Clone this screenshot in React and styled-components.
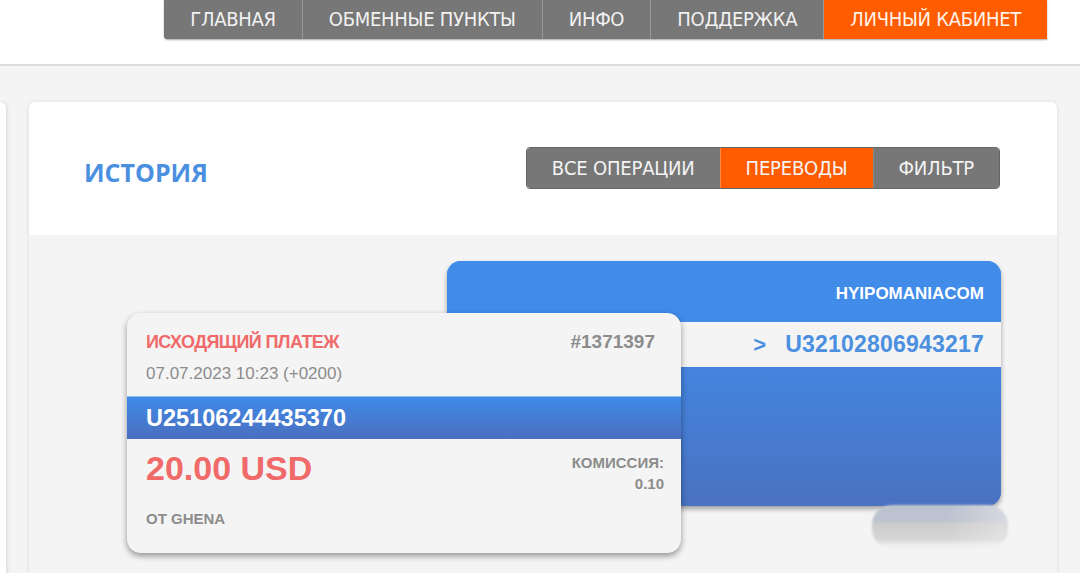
import React from "react";
import styled, { createGlobalStyle } from "styled-components";

const NARROW = `"DejaVu Sans Condensed", "DejaVu Sans", sans-serif`;
const BODY = `"Liberation Sans", Arial, sans-serif`;

const GlobalStyle = createGlobalStyle`
    html, body {
        margin: 0;
        padding: 0;
        background: #f4f4f4;
        font-family: ${BODY};
    }
    body {
        width: 1080px;
        height: 573px;
        overflow: hidden;
    }
`;

const menu = ["ГЛАВНАЯ", "ОБМЕННЫЕ ПУНКТЫ", "ИНФО", "ПОДДЕРЖКА", "ЛИЧНЫЙ КАБИНЕТ"];
const tabs = ["ВСЕ ОПЕРАЦИИ", "ПЕРЕВОДЫ", "ФИЛЬТР"];

const App = () => {
    return (
        <>
            <GlobalStyle />
            <Header>
                <Nav>
                    {menu.map((item, i) => (
                        <NavItem key={item} $active={i === menu.length - 1}>{item}</NavItem>
                    ))}
                </Nav>
            </Header>
            <Page>
                <SideEdge />
                <Card>
                    <CardHead>
                        <Title>ИСТОРИЯ</Title>
                        <Tabs>
                            {tabs.map((tab) => (
                                <Tab key={tab} $active={tab === "ПЕРЕВОДЫ"}>{tab}</Tab>
                            ))}
                        </Tabs>
                    </CardHead>
                    <CardBody>
                        <BackStack>
                            <Wallet>
                                <WalletName>HYIPOMANIACOM</WalletName>
                                <WalletRow>
                                    <Arrow>&gt;</Arrow>
                                    U32102806943217
                                </WalletRow>
                                <WalletFill />
                            </Wallet>
                            <Smudge />
                        </BackStack>
                        <Payment>
                            <PayTop>
                                <PayType>ИСХОДЯЩИЙ ПЛАТЕЖ</PayType>
                                <PayId>#1371397</PayId>
                            </PayTop>
                            <PayDate>07.07.2023 10:23 (+0200)</PayDate>
                            <PayAccount>U25106244435370</PayAccount>
                            <PayMiddle>
                                <Amount>20.00 USD</Amount>
                                <Fee>
                                    КОМИССИЯ:
                                    <br />
                                    0.10
                                </Fee>
                            </PayMiddle>
                            <PayFrom>ОТ GHENA</PayFrom>
                        </Payment>
                    </CardBody>
                </Card>
            </Page>
        </>
    );
};

export default App;

const Header = styled.div`
    height: 64px;
    background: #fff;
    border-bottom: 2px solid #dcdcdc;
    display: flex;
    justify-content: flex-end;
    padding-right: 33px;
`;

const Nav = styled.div`
    display: flex;
    height: 39px;
    border-bottom-left-radius: 4px;
    overflow: hidden;
    box-shadow: 0 1px 2px rgba(0,0,0,0.35);
    background: #777;
`;

const NavItem = styled.div`
    display: flex;
    align-items: center;
    padding: 0 26px 1px 26px;
    font-family: ${NARROW};
    font-size: 20px;
    letter-spacing: -0.28px;
    color: ${(p) => (p.$active ? "#fff2e8" : "#f2f2f2")};
    background: ${(p) => (p.$active ? "#ff5c00" : "#777777")};
    border-left: 1px solid #999;
    &:first-child {
        border-left: none;
    }
`;

const Page = styled.div`
    display: flex;
    padding-top: 36px;
`;

const SideEdge = styled.div`
    width: 6px;
    height: 480px;
    background: #fff;
    border-radius: 0 6px 0 0;
    box-shadow: 1px 0 4px rgba(0,0,0,0.12);
    margin-right: 23px;
`;

const Card = styled.div`
    width: 1028px;
    background: #f4f4f4;
    border-radius: 6px 6px 0 0;
    box-shadow: 0 0 4px rgba(0,0,0,0.1);
    overflow: hidden;
`;

const CardHead = styled.div`
    height: 133px;
    background: #fff;
    display: flex;
    align-items: center;
    justify-content: space-between;
    padding: 0 57px 0 55px;
    box-sizing: border-box;
`;

const Title = styled.h2`
    margin: 6px 0 0;
    font-family: "Open Sans", sans-serif;
    font-weight: 700;
    font-size: 25px;
    color: #4a8fe0;
`;

const Tabs = styled.div`
    display: flex;
    height: 42px;
    margin-top: -2px;
    border-radius: 4px;
    overflow: hidden;
    border: 1px solid #666;
    box-sizing: border-box;
`;

const Tab = styled.div`
    display: flex;
    align-items: center;
    padding: 0 25px 0 25px;
    font-family: ${NARROW};
    font-size: 20px;
    letter-spacing: -0.2px;
    color: #f4f4f4;
    background: ${(p) => (p.$active ? "#ff5c00" : "#777777")};
    border-left: 1px solid ${(p) => (p.$active ? "#ff8a40" : "#8a8a8a")};
    &:first-child {
        border-left: none;
    }
`;

const CardBody = styled.div`
    position: relative;
    height: 340px;
    padding: 26px 0 0 418px;
    box-sizing: border-box;
`;

const BackStack = styled.div`
    display: flex;
    flex-direction: column;
    width: 554px;
`;

const Wallet = styled.div`
    height: 245px;
    border-radius: 14px;
    background: linear-gradient(#418ce9, #4a72c0);
    box-shadow: 0 3px 5px rgba(0,0,0,0.35);
    overflow: hidden;
    display: flex;
    flex-direction: column;
`;

const WalletName = styled.div`
    height: 61px;
    display: flex;
    align-items: flex-end;
    justify-content: flex-end;
    padding: 0 17px 18px 0;
    box-sizing: border-box;
    color: #fff;
    font-weight: 700;
    font-size: 17px;
    background: #418be9;
`;

const WalletRow = styled.div`
    height: 45px;
    background: #f4f4f4;
    display: flex;
    align-items: center;
    justify-content: flex-end;
    padding-right: 17px;
    color: #4a8fe0;
    font-size: 23px;
    font-weight: 700;
    letter-spacing: 0.2px;
`;

const Arrow = styled.span`
    margin-right: 19px;
    font-size: 22px;
`;

const WalletFill = styled.div`
    flex: 1;
    background: linear-gradient(#4384de, #4a72c1);
`;

const Smudge = styled.div`
    width: 136px;
    height: 44px;
    margin: -1px 0 0 425px;
    border-radius: 20px;
    background:
        linear-gradient(to right, rgba(244,244,244,0) 55%, rgba(244,244,244,0.45) 100%),
        linear-gradient(#bcc2cf 0%, #bcc2cf 38%, #cbcbcb 40%, #d6d6d6 78%, #ececec 90%, #f2f2f2 100%);
    filter: blur(1px);
`;

const Payment = styled.div`
    position: absolute;
    left: 98px;
    top: 78px;
    width: 554px;
    height: 240px;
    border-radius: 14px;
    background: #f4f4f4;
    box-shadow: 0 3px 6px rgba(0,0,0,0.4);
    overflow: hidden;
    display: flex;
    flex-direction: column;
`;

const PayTop = styled.div`
    display: flex;
    justify-content: space-between;
    align-items: baseline;
    padding: 18px 26px 0 19px;
`;

const PayType = styled.div`
    color: #f06a6a;
    font-weight: 700;
    font-size: 18px;
    letter-spacing: -0.6px;
`;

const PayId = styled.div`
    color: #8c8c8c;
    font-weight: 700;
    font-size: 19px;
`;

const PayDate = styled.div`
    padding: 11px 0 0 19px;
    color: #8c8c8c;
    font-size: 17px;
`;

const PayAccount = styled.div`
    margin-top: 12px;
    height: 42px;
    display: flex;
    align-items: center;
    padding-left: 19px;
    color: #fff;
    font-weight: 700;
    font-size: 23.5px;
    background: linear-gradient(#3f8ae8, #4a6fbf);
    border-top: 1px solid #8fc0f5;
`;

const PayMiddle = styled.div`
    display: flex;
    justify-content: space-between;
    padding: 10px 17px 0 19px;
`;

const Amount = styled.div`
    color: #f06a6a;
    font-weight: 700;
    font-size: 34px;
`;

const Fee = styled.div`
    margin-top: 3px;
    text-align: right;
    color: #8c8c8c;
    font-weight: 700;
    font-size: 15px;
    line-height: 21px;
`;

const PayFrom = styled.div`
    padding: 16px 0 0 19px;
    color: #8c8c8c;
    font-weight: 700;
    font-size: 15px;
`;
